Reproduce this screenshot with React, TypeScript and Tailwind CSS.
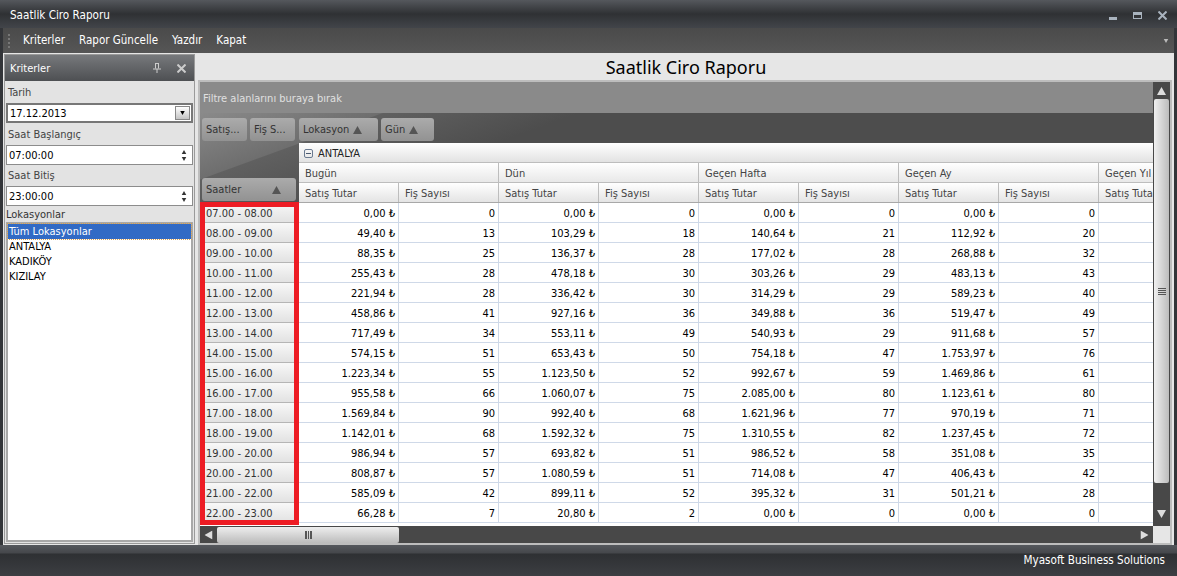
const rows = [
  ['07.00 - 08.00', '0,00', 0, '0,00', 0, '0,00', 0, '0,00', 0],
  ['08.00 - 09.00', '49,40', 13, '103,29', 18, '140,64', 21, '112,92', 20],
  ['09.00 - 10.00', '88,35', 25, '136,37', 28, '177,02', 28, '268,88', 32],
  ['10.00 - 11.00', '255,43', 28, '478,18', 30, '303,26', 29, '483,13', 43],
  ['11.00 - 12.00', '221,94', 28, '336,42', 30, '314,29', 29, '589,23', 40],
  ['12.00 - 13.00', '458,86', 41, '927,16', 36, '349,88', 36, '519,47', 49],
  ['13.00 - 14.00', '717,49', 34, '553,11', 49, '540,93', 29, '911,68', 57],
  ['14.00 - 15.00', '574,15', 51, '653,43', 50, '754,18', 47, '1.753,97', 76],
  ['15.00 - 16.00', '1.223,34', 55, '1.123,50', 52, '992,67', 59, '1.469,86', 61],
  ['16.00 - 17.00', '955,58', 66, '1.060,07', 75, '2.085,00', 80, '1.123,61', 80],
  ['17.00 - 18.00', '1.569,84', 90, '992,40', 68, '1.621,96', 77, '970,19', 71],
  ['18.00 - 19.00', '1.142,01', 68, '1.592,32', 75, '1.310,55', 82, '1.237,45', 72],
  ['19.00 - 20.00', '986,94', 57, '693,82', 51, '986,52', 58, '351,08', 35],
  ['20.00 - 21.00', '808,87', 57, '1.080,59', 51, '714,08', 47, '406,43', 42],
  ['21.00 - 22.00', '585,09', 42, '899,11', 52, '395,32', 31, '501,21', 28],
  ['22.00 - 23.00', '66,28', 7, '20,80', 2, '0,00', 0, '0,00', 0],
];

const periods = ['Bugün', 'Dün', 'Geçen Hafta', 'Geçen Ay'];

function Triangle({ up = true, className = '' }: { up?: boolean; className?: string }) {
  return (
    <svg width="9" height="8" viewBox="0 0 9 8" className={className}>
      <path d={up ? 'M4.5 0 9 8H0z' : 'M0 0h9L4.5 8z'} fill="currentColor" />
    </svg>
  );
}

function Chip({ label, arrow, className }: { label: string; arrow?: boolean; className: string }) {
  return (
    <div className={`flex items-center gap-1 h-[23px] pl-[4px] rounded-[3px] whitespace-nowrap bg-gradient-to-b from-[#ababab] to-[#929292] text-[#333] ${className}`}>
      <span>{label}</span>
      {arrow && <Triangle className="text-[#555]" />}
    </div>
  );
}

function Spinner({ value }: { value: string }) {
  return (
    <div className="mx-px h-5 flex items-center justify-between bg-white border border-[#8c8c8c] pl-[2px] pr-[5px] text-black">
      <span>{value}</span>
      <div className="flex flex-col gap-[3px] text-[#333]">
        <Triangle className="w-[6px] h-1" />
        <Triangle up={false} className="w-[6px] h-1" />
      </div>
    </div>
  );
}

export default function App() {
  return (
    <div className="relative w-[1177px] h-[576px] flex flex-col overflow-hidden bg-[#333539] text-[11px] leading-none font-['DejaVu_Sans_Condensed','Noto_Sans',sans-serif] text-[#222]">
      {/* title bar */}
      <div className="h-[28px] shrink-0 flex items-center justify-between pl-[10px] pr-[10px] bg-gradient-to-b from-[#55585d] via-[#2f3134] to-[#42454a] text-[11.6px] text-white">
        <span className="pt-[3px]">Saatlik Ciro Raporu</span>
        <div className="flex items-center gap-[16px] pt-[3px] text-[#a9b3be]">
          <div className="w-[8px] h-[3px] mt-[5px] bg-current" />
          <div className="w-[9px] h-[7px] border border-current border-t-[3px]" />
          <svg width="9" height="9" viewBox="0 0 9 9"><path d="M.5.5l8 8M8.5.5l-8 8" stroke="currentColor" strokeWidth="2" /></svg>
        </div>
      </div>

      <div className="flex-1 flex flex-col mx-[3px] min-h-0 bg-[#e6e6e6]">
        {/* toolbar */}
        <div className="h-[25px] shrink-0 flex items-center bg-gradient-to-b from-[#4a4a4a] to-[#565656] text-[11.5px] text-white">
          <div className="ml-[5px] w-[3px] h-[14px] border-l-2 border-dotted border-[#777]" />
          <div className="ml-[12px] flex gap-[14px]">
            <span>Kriterler</span>
            <span>Rapor Güncelle</span>
            <span>Yazdır</span>
            <span>Kapat</span>
          </div>
          <Triangle up={false} className="ml-auto mr-[5px] w-[6px] h-1 text-[#bbb]" />
        </div>

        <div className="flex-1 flex min-h-0 pt-px pl-px gap-[3px]">
          {/* criteria panel */}
          <div className="w-[191px] h-[490px] shrink-0 flex flex-col bg-[#e3e3e3] border border-[#9a9a9a]">
            <div className="h-[26px] shrink-0 flex items-center justify-between pl-[5px] pr-2 bg-gradient-to-b from-[#77797c] to-[#4e5053] text-white">
              <span>Kriterler</span>
              <div className="flex items-center gap-[16px] text-[#ccc]">
                <svg width="8" height="10" viewBox="0 0 8 10"><path d="M2 .5h4M2.5.5v5M5.5.5v5M0 6h8M4 6v4" stroke="currentColor" fill="none" /></svg>
                <svg width="9" height="9" viewBox="0 0 9 9"><path d="M.5.5l8 8M8.5.5l-8 8" stroke="currentColor" strokeWidth="2" /></svg>
              </div>
            </div>
            <div className="pl-[3px] pt-[6px] h-[22px] text-[#444]">Tarih</div>
            <div className="mx-px h-5 flex items-center justify-between bg-white border-2 border-[#777] pl-[2px] pr-px text-black">
              <span>17.12.2013</span>
              <div className="w-[15px] h-[14px] flex items-center justify-center bg-gradient-to-b from-white to-[#c4c4c4] border border-[#888]">
                <Triangle up={false} className="w-[7px] h-1 text-black" />
              </div>
            </div>
            <div className="pl-[3px] pt-[6px] h-[22px] text-[#444]">Saat Başlangıç</div>
            <Spinner value="07:00:00" />
            <div className="pl-[3px] pt-[5px] h-[21px] text-[#444]">Saat Bitiş</div>
            <Spinner value="23:00:00" />
            <div className="pl-px h-[16px] pt-[3px] text-[#333]">Lokasyonlar</div>
            <div className="mx-px mb-px flex-1 bg-white border-2 border-[#a8a8a8] text-black">
              <div className="h-[15px] flex items-center pl-px bg-[#316ac5] text-white outline-1 outline-dotted outline-[#d8a050]">Tüm Lokasyonlar</div>
              <div className="h-[15px] flex items-center pl-px">ANTALYA</div>
              <div className="h-[15px] flex items-center pl-px">KADIKÖY</div>
              <div className="h-[15px] flex items-center pl-px">KIZILAY</div>
            </div>
          </div>

          {/* report */}
          <div className="flex-1 flex flex-col min-w-0">
            <div className="h-[26px] shrink-0 flex items-center justify-center text-[18px] font-['Noto_Sans',sans-serif] text-black">Saatlik Ciro Raporu</div>
            <div className="relative w-[974px] h-[465px] flex border-2 border-[#bdbdbd] bg-white">
              <div className="w-[955px] flex flex-col min-w-0">
                <div className="flex-1 flex flex-col min-h-0 overflow-hidden">
                  <div className="h-[31px] shrink-0 flex items-center pl-[3px] pt-px bg-[#8a8a8a] text-[#e0e0e0]">Filtre alanlarını buraya bırak</div>
                  {/* pivot area */}
                  <div className="h-[90px] shrink-0 flex bg-[linear-gradient(160deg,#8a8a8a_0,#6e6e6e_62px,#606060_63px,#4d4d4d_130px)]">
                    <div className="w-[99px] shrink-0 flex flex-col justify-between pt-[5px] pl-[2px] pb-[2px]">
                      <div className="flex gap-[3px] w-[235px]">
                        <Chip label="Satış..." className="w-[45px] shrink-0" />
                        <Chip label="Fiş S..." className="w-[45px] shrink-0" />
                        <Chip label="Lokasyon" arrow className="w-[79px] ml-px shrink-0" />
                        <Chip label="Gün" arrow className="w-[53px] shrink-0" />
                      </div>
                      <Chip label="Saatler" arrow className="w-[94px] shrink-0 justify-between pr-[15px]" />
                    </div>
                    <div className="flex-1 min-w-0 self-end overflow-hidden">
                      <div className="w-[900px] h-[60px] flex flex-col rounded-tl-[3px] bg-[#ececec] text-[#444]">
                        <div className="h-5 flex items-center gap-[5px] pl-[5px] pt-px bg-gradient-to-b from-white to-[#e2e2e2] border-b border-[#bdbdbd] text-[#222]">
                          <div className="w-[9px] h-[9px] flex items-center justify-center rounded-[2px] border border-[#6a7a90]">
                            <div className="w-[5px] h-px bg-[#4a5a70]" />
                          </div>
                          <span>ANTALYA</span>
                        </div>
                        <div className="h-5 flex border-b border-[#bdbdbd] bg-gradient-to-b from-white to-[#e8e8e8]">
                          {[...periods, 'Geçen Yıl'].map((p) => (
                            <div key={p} className="w-[200px] shrink-0 flex items-center pl-[6px] pt-px border-r border-[#bdbdbd]">{p}</div>
                          ))}
                        </div>
                        <div className="h-5 flex border-b border-[#a8a8a8] bg-gradient-to-b from-white to-[#e4e4e4]">
                          {periods.map((p) => (
                            <div key={p} className="w-[200px] shrink-0 flex">
                              <div className="w-[100px] flex items-center pl-[6px] pt-px border-r border-[#bdbdbd]">Satış Tutar</div>
                              <div className="w-[100px] flex items-center pl-[6px] pt-px border-r border-[#bdbdbd]">Fiş Sayısı</div>
                            </div>
                          ))}
                          <div className="w-[100px] flex items-center pl-[6px] pt-px">Satış Tutar</div>
                        </div>
                      </div>
                    </div>
                  </div>
                  {/* rows */}
                  <div className="flex-1 min-h-0 overflow-hidden bg-white text-black">
                    {rows.map((r) => (
                      <div key={r[0]} className="h-5 flex">
                        <div className="w-[99px] shrink-0 flex items-center pl-[6px] pt-px bg-gradient-to-b from-[#f8f8f8] to-[#e2e2e2] border-b border-[#b5b5b5] text-[#333]">{r[0]}</div>
                        {r.slice(1).map((v, i) => (
                          <div key={i} className="w-[100px] shrink-0 flex items-center justify-end pr-[3px] pt-px border-r border-b border-[#cfd9e8]">
                            {i % 2 === 0 ? `${v} ₺` : v}
                          </div>
                        ))}
                        <div className="w-[100px] shrink-0 border-b border-[#cfd9e8]" />
                      </div>
                    ))}
                  </div>
                </div>
                {/* horizontal scrollbar */}
                <div className="h-[17px] shrink-0 flex items-center bg-[#484848]">
                  <div className="w-[17px] flex justify-center text-[#ddd]"><Triangle className="-rotate-90" /></div>
                  <div className="w-[182px] h-[16px] flex items-center justify-center bg-gradient-to-b from-[#eeeeee] to-[#bcbcbc] rounded-[2px]">
                    <div className="w-[7px] h-[8px] border-x border-[#555] bg-[repeating-linear-gradient(90deg,#555_0,#555_1px,transparent_1px,transparent_2px)]" />
                  </div>
                  <div className="ml-auto w-[17px] flex justify-center text-[#ddd]"><Triangle className="rotate-90" /></div>
                </div>
              </div>
              {/* vertical scrollbar */}
              <div className="w-[17px] shrink-0 flex flex-col items-center bg-[#484848]">
                <div className="h-[17px] flex items-center justify-center text-[#ddd]"><Triangle /></div>
                <div className="w-[15px] h-[384px] flex items-center justify-center bg-gradient-to-r from-[#f0f0f0] to-[#bcbcbc] rounded-[2px]">
                  <div className="w-[8px] h-[7px] bg-[repeating-linear-gradient(0deg,#555_0,#555_1px,transparent_1px,transparent_2px)]" />
                </div>
                <div className="mt-auto h-[42px] w-full flex flex-col items-center">
                  <div className="h-[25px] flex items-center justify-center text-[#ddd]"><Triangle up={false} /></div>
                  <div className="h-[17px] w-full bg-[#e6e6e6]" />
                </div>
              </div>
              {/* red highlight drawn over the hours column */}
              <div className="absolute left-0 top-[120px] w-[99px] h-[323px] border-[5px] border-[#ed1c24] pointer-events-none" />
            </div>
          </div>
        </div>
      </div>

      {/* status bar */}
      <div className="h-[31px] shrink-0 flex items-center justify-end pr-[12px] bg-[linear-gradient(180deg,#55585d_0,#45474b_8px,#2e3033_9px,#3c3e42_100%)] text-[11.6px] text-white">
        Myasoft Business Solutions
      </div>
    </div>
  );
}
